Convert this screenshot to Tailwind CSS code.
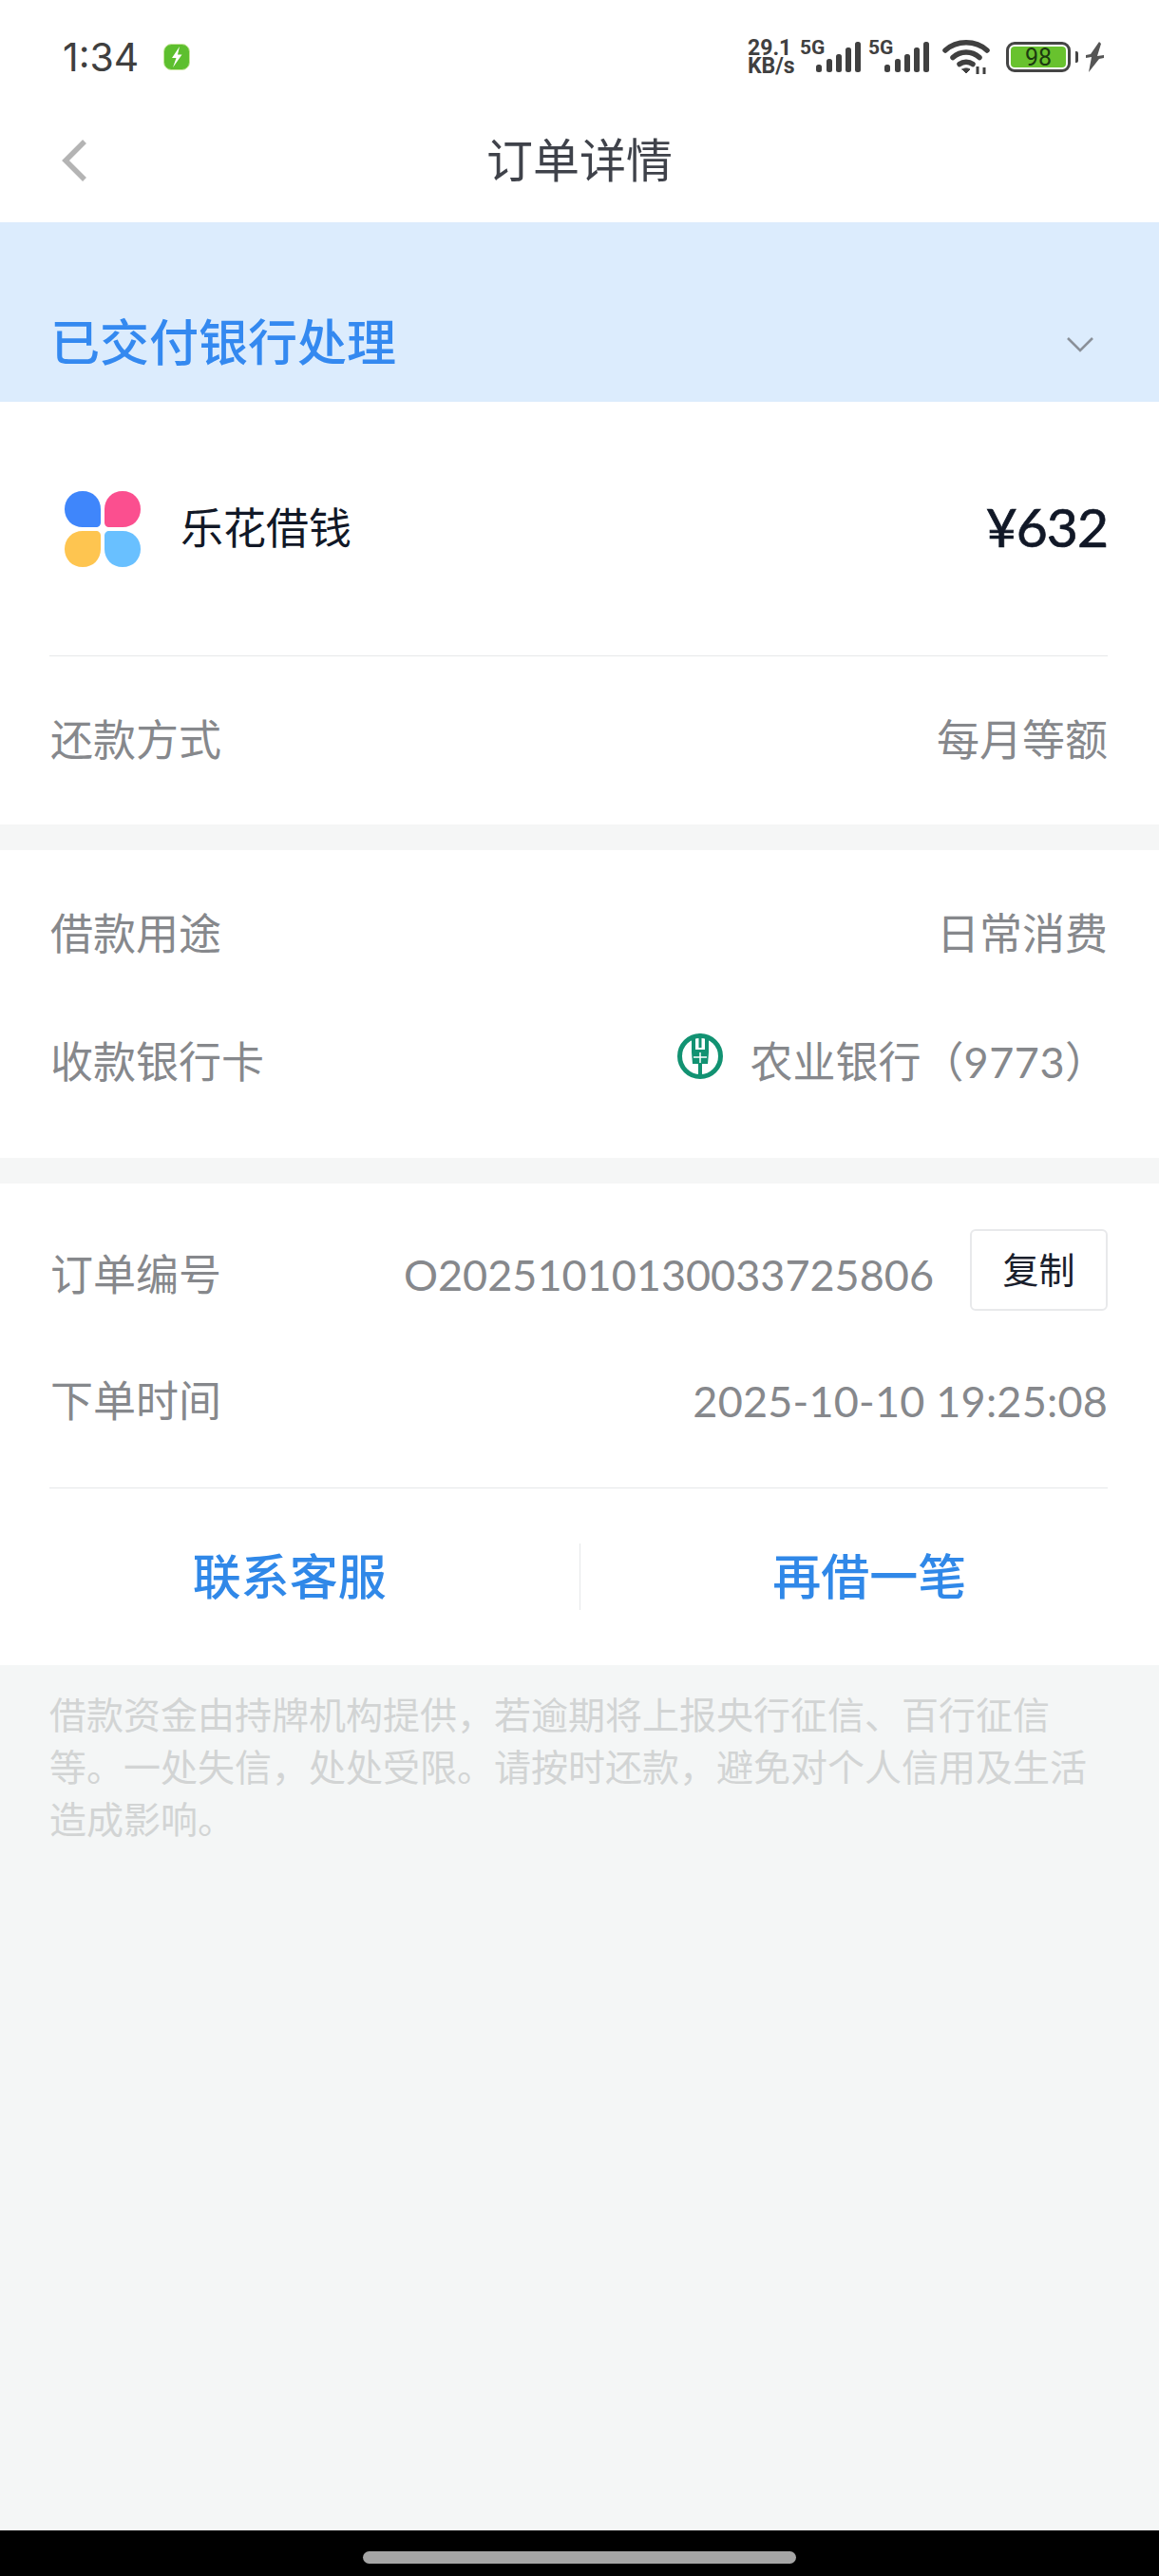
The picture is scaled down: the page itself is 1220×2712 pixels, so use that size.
<!DOCTYPE html>
<html lang="zh">
<head>
<meta charset="utf-8">
<script src="https://cdn.jsdelivr.net/npm/@tailwindcss/browser@4"></script>
</head>
<body class="m-0">
<div class="w-[1220px] h-[2712px] flex flex-col bg-[#f4f6f6] font-['Lato','Noto_Sans_CJK_SC',sans-serif] overflow-hidden">
  <!-- status bar -->
  <div class="h-[120px] bg-white flex items-center justify-between pl-[66px] pr-[58px] shrink-0">
    <div class="flex items-center gap-[26px]">
      <span class="text-[41px] leading-none text-[#3f3f3f] font-['Inter','Roboto',sans-serif]">1:34</span>
      <svg class="w-[28px] h-[28px]" viewBox="0 0 28 28"><rect x="0.5" y="0.5" width="27" height="27" rx="8" fill="#5dbf2e" stroke="#c5e69a"/><path d="M17 3 L9 15 H13.5 L10 25 L19.5 11.5 H15 Z" fill="#fff"/></svg>
    </div>
    <div class="flex items-center">
      <div class="flex flex-col font-['Roboto',sans-serif] font-bold text-[#404040] text-[23px] leading-[19px] w-[55px]">
        <span>29.1</span><span>KB/s</span>
      </div>
      <div class="relative w-[72px] h-[50px]">
        <span class="absolute left-0 top-[5px] font-['Roboto',sans-serif] font-bold text-[21px] leading-none text-[#404040]">5G</span>
        <svg class="absolute left-[17px] top-[9px] w-[48px] h-[32px]" viewBox="0 0 48 32" fill="#404040"><rect x="0" y="24" width="6" height="8" rx="2.5"/><rect x="11" y="18" width="6" height="14" rx="2.5"/><rect x="21" y="13" width="6" height="19" rx="2.5"/><rect x="31" y="6" width="6" height="26" rx="2.5"/><rect x="41" y="0" width="6" height="32" rx="2.5"/></svg>
      </div>
      <div class="relative w-[78px] h-[50px]">
        <span class="absolute left-0 top-[5px] font-['Roboto',sans-serif] font-bold text-[21px] leading-none text-[#404040]">5G</span>
        <svg class="absolute left-[17px] top-[9px] w-[48px] h-[32px]" viewBox="0 0 48 32" fill="#404040"><rect x="0" y="24" width="6" height="8" rx="2.5"/><rect x="11" y="18" width="6" height="14" rx="2.5"/><rect x="21" y="13" width="6" height="19" rx="2.5"/><rect x="31" y="6" width="6" height="26" rx="2.5"/><rect x="41" y="0" width="6" height="32" rx="2.5"/></svg>
      </div>
      <svg class="w-[50px] h-[36px]" viewBox="0 0 50 36" fill="none" stroke="#404040" stroke-width="5.5" stroke-linecap="round"><path d="M3 11 C15 0 35 0 47 11"/><path d="M11 18.5 C19 11 31 11 39 18.5"/><path d="M18 25.5 C22 22.5 28 22.5 32 25.5"/><path d="M21 31 L25 35 L29 31 C27 29.5 23 29.5 21 31Z" fill="#404040" stroke-width="1"/><path d="M37 28 V36 M44 29 V36" stroke-width="3" stroke-linecap="butt"/></svg>
      <div class="ml-[17px] w-[68px] h-[32px] border-[3px] border-[#454545] rounded-[9px] p-[2px] flex">
        <div class="flex-1 bg-[#68c22e] rounded-[4px] flex items-center justify-center text-[25px] leading-none text-[#1c3a10] font-['Roboto',sans-serif]">98</div>
      </div>
      <div class="w-[3px] h-[12px] bg-[#454545] rounded-r-[2px] ml-[5px]"></div>
      <svg class="w-[19px] h-[32px] ml-[8px]" viewBox="0 0 19 32" fill="#555"><path d="M14 0 L5 13 L0 14 V17 L6 16 L3 32 L14 18 L19 17 V14 L12 15 L16 2 Z"/></svg>
    </div>
  </div>
  <!-- nav -->
  <div class="relative h-[114px] bg-white flex items-start justify-center pt-[17px] shrink-0">
    <svg class="absolute left-[64px] top-[27px] w-[28px] h-[44px]" viewBox="0 0 28 44" fill="none" stroke="#b4b4b4" stroke-width="5.5"><path d="M25 2 L5 22 L25 42"/></svg>
    <span class="text-[49px] leading-[62px] text-[#3f424a]">订单详情</span>
  </div>
  <!-- state banner -->
  <div class="h-[189px] bg-[#dcecfd] flex items-end justify-between pl-[53px] pr-[68px] pb-[27px] shrink-0">
    <span class="text-[52px] leading-[76px] text-[#3489f0] font-medium font-['Noto_Sans_CJK_SC',sans-serif]">已交付银行处理</span>
    <svg class="w-[30px] h-[18px] mb-[24px]" viewBox="0 0 30 18" fill="none" stroke="#8a9099" stroke-width="2.6"><path d="M2 2 L15 15 L28 2"/></svg>
  </div>
  <!-- card 1 -->
  <div class="bg-white pl-[52px] pr-[54px] shrink-0">
    <div class="h-[267px] flex items-center">
      <svg class="w-[80px] h-[80px] ml-[16px]" viewBox="0 0 80 80">
        <path d="M19 0 C30 0 38 8 38 19 V33 C38 36 36 38 33 38 H19 C8 38 0 30 0 19 C0 8 8 0 19 0Z" fill="#3f86fb"/>
        <path d="M61 0 C72 0 80 8 80 19 C80 30 72 38 61 38 H47 C44 38 42 36 42 33 V19 C42 8 50 0 61 0Z" fill="#fb4f8f"/>
        <path d="M19 80 C8 80 0 72 0 61 C0 50 8 42 19 42 H33 C36 42 38 44 38 47 V61 C38 72 30 80 19 80Z" fill="#fec550"/>
        <path d="M61 80 C50 80 42 72 42 61 V47 C42 44 44 42 47 42 H61 C72 42 80 50 80 61 C80 72 72 80 61 80Z" fill="#69c0ff"/>
      </svg>
      <span class="ml-[42px] mb-[6px] text-[45px] leading-none text-[#111827] font-['Noto_Sans_CJK_SC',sans-serif]">乐花借钱</span>
      <span class="ml-auto mb-[4px] text-[57px] leading-none text-[#111827] tracking-[-1px] [-webkit-text-stroke:0.7px_#111827]">¥632</span>
    </div>
    <div class="h-[1px] bg-[#e6e8e9]"></div>
    <div class="h-[177px] pl-[1px] flex items-center justify-between text-[45px] text-[#86888c]">
      <span>还款方式</span><span>每月等额</span>
    </div>
  </div>
  <div class="h-[27px] bg-[#f5f6f6] shrink-0"></div>
  <!-- card 2 -->
  <div class="bg-white pl-[53px] pr-[54px] pt-[22px] pb-[34px] shrink-0 text-[45px] text-[#86888c]">
    <div class="h-[134px] flex items-center justify-between">
      <span>借款用途</span><span>日常消费</span>
    </div>
    <div class="h-[134px] flex items-center justify-between pt-[2px]">
      <span>收款银行卡</span>
      <span class="flex items-center">
        <svg class="w-[48px] h-[48px] mr-[29px] -mt-[14px]" viewBox="0 0 48 48" fill="#129272">
          <circle cx="24" cy="24" r="21.5" fill="none" stroke="#129272" stroke-width="5"/>
          <path d="M15 3 H19 V17 H29 V3 H33 V20 L32 32 H26 V46 H22 V32 H16 L15 20Z"/>
          <rect x="22.5" y="0" width="3" height="15"/>
          <path d="M17 25 H31 M24 20 V31" stroke="#fff" stroke-width="1.5"/>
        </svg>
        <span>农业银行（<span class="tracking-[0.5px]">9773</span>）</span>
      </span>
    </div>
  </div>
  <div class="h-[27px] bg-[#f5f6f6] shrink-0"></div>
  <!-- card 3 -->
  <div class="bg-white pl-[53px] pr-[54px] pt-[30px] shrink-0 text-[45px] text-[#86888c]">
    <div class="h-[133px] flex items-center justify-between">
      <span>订单编号</span>
      <span class="flex items-center">
        <span>O20251010130033725806</span>
        <span class="ml-[38px] -mt-[12px] w-[145px] h-[86px] border-[2px] border-[#e8e9eb] rounded-[6px] flex items-center justify-center text-[38px] text-[#1a202c]">复制</span>
      </span>
    </div>
    <div class="h-[134px] flex items-center justify-between">
      <span>下单时间</span>
      <span class="tracking-[0.2px]">2025-10-10 19:25:08</span>
    </div>
    <div class="mt-[23px] -ml-[1px] h-[1px] bg-[#e6e8e9]"></div>
    <div class="-ml-[53px] -mr-[54px] h-[186px] flex items-center text-[51px] font-medium text-[#3088e8] font-['Noto_Sans_CJK_SC',sans-serif]">
      <div class="flex-1 text-center pb-[6px]">联系客服</div>
      <div class="w-[1px] h-[70px] bg-[#e6e8e9]"></div>
      <div class="flex-1 text-center pb-[6px]">再借一笔</div>
    </div>
  </div>
  <!-- notice -->
  <div class="flex-1 px-[52px] pt-[25px] text-[39px] leading-[55px] text-[#d2d4d4]">
    借款资金由持牌机构提供，若逾期将上报央行征信、百行征信等。一处失信，处处受限。请按时还款，避免对个人信用及生活造成影响。
  </div>
  <!-- nav bar -->
  <div class="h-[48px] bg-black flex items-start justify-center pt-[22px] shrink-0">
    <div class="w-[456px] h-[13px] rounded-full bg-[#a5a5a5]"></div>
  </div>
</div>
</body>
</html>
